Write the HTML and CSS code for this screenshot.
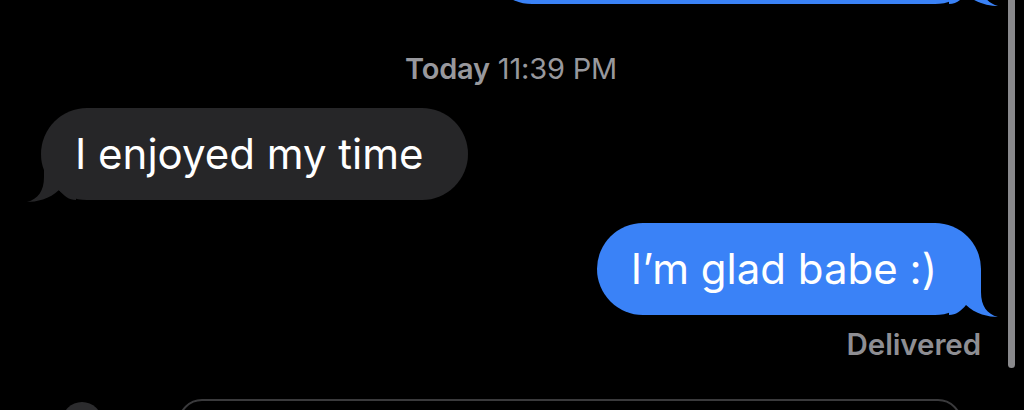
FILE: index.html
```html
<!DOCTYPE html>
<html lang="en">
<head>
  <meta charset="UTF-8">
  <meta name="viewport" content="width=device-width, initial-scale=1.0">
  <title>Messages</title>
  <link rel="stylesheet" href="styles.css">
</head>
<body>
  <div class="screen">
    <div class="thread">
      <div class="bubble sent top-cut">
        <svg class="tail" viewBox="0 0 50 47" width="50" height="47"><path d="M0,0 H32 V22 C32,36 38,44 49,47 C40,47 26,44 17,35 C12,41 7,45 0,45 Z"/></svg>
      </div>

      <div class="stamp"><b>Today</b> 11:39 PM</div>

      <div class="bubble received">I enjoyed my time
        <svg class="tail" viewBox="0 0 50 47" width="50" height="47"><path d="M0,0 H32 V22 C32,36 38,44 49,47 C40,47 26,44 17,35 C12,41 7,45 0,45 Z"/></svg>
      </div>

      <div class="bubble sent">I’m glad babe :)
        <svg class="tail" viewBox="0 0 50 47" width="50" height="47"><path d="M0,0 H32 V22 C32,36 38,44 49,47 C40,47 26,44 17,35 C12,41 7,45 0,45 Z"/></svg>
      </div>
      <div class="status">Delivered</div>
    </div>

    <div class="composer">
      <div class="apps-btn"></div>
      <div class="input"></div>
    </div>

    <div class="scrollbar"></div>
  </div>
</body>
</html>
```

FILE: styles.css
```css
* { box-sizing: border-box; }
body {
  margin: 0;
  background: #000;
  font-family: Inter, 'Noto Sans', sans-serif;
  color: #fff;
}
.screen {
  position: relative;
  height: 410px;
  overflow: hidden;
}
.thread {
  display: flex;
  flex-direction: column;
  padding: 0 43px 0 41px;
}
.bubble {
  position: relative;
  height: 92px;
  padding: 0 44px 0 34px;
  border-radius: 46px;
  font-size: 42px;
  line-height: 92px;
  white-space: nowrap;
}
.tail {
  position: absolute;
  bottom: -2px;
}
.sent {
  align-self: flex-end;
  background: #3a82f7;
}
.sent .tail {
  right: -18px;
  fill: #3a82f7;
}
.received {
  align-self: flex-start;
  background: #262628;
  margin-top: 22px;
}
.received .tail {
  left: -15px;
  fill: #262628;
  transform: scaleX(-1);
}
.top-cut {
  margin-top: -88px;
  width: 495px;
}
.received + .sent {
  margin-top: 23px;
}
.stamp {
  align-self: center;
  margin-top: 48px;
  font-size: 29px;
  line-height: 34px;
  color: #98989d;
  letter-spacing: -0.2px;
}
.stamp b {
  font-weight: 600;
}
.status {
  align-self: flex-end;
  margin-top: 12px;
  font-size: 29.5px;
  line-height: 34px;
  font-weight: 600;
  color: #8e8e93;
  letter-spacing: -0.1px;
}
.composer {
  display: flex;
  align-items: flex-start;
  gap: 76px;
  padding: 0 62px 0 62px;
  margin-top: 38px;
}
.apps-btn {
  flex: none;
  width: 40px;
  height: 40px;
  margin-top: 3px;
  border-radius: 50%;
  background: #2c2c2e;
}
.input {
  flex: 1;
  height: 60px;
  border: 2px solid #3a3a3c;
  border-radius: 24px;
}
.scrollbar {
  position: absolute;
  top: -6px;
  right: 9px;
  width: 7px;
  height: 374px;
  border-radius: 4px;
  background: #8a8a8d;
}
```
